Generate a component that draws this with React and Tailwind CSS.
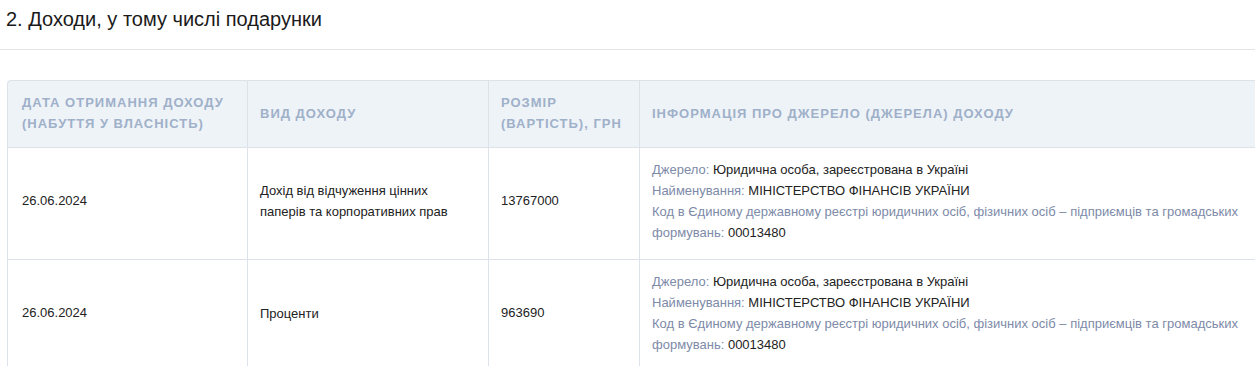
import React from 'react';

const ROWS = [
    { date: '26.06.2024', kind: 'Дохід від відчуження цінних паперів та корпоративних прав', amount: '13767000' },
    { date: '26.06.2024', kind: 'Проценти', amount: '963690' },
];

function SourceInfo() {
    return (
        <div className="leading-[21px]">
            <p><span className="text-[#7d8aa8]">Джерело:</span> Юридична особа, зареєстрована в Україні</p>
            <p><span className="text-[#7d8aa8]">Найменування:</span> МІНІСТЕРСТВО ФІНАНСІВ УКРАЇНИ</p>
            <p className="text-[#7d8aa8]">Код в Єдиному державному реєстрі юридичних осіб, фізичних осіб – підприємців та громадських</p>
            <p><span className="text-[#7d8aa8]">формувань:</span> 00013480</p>
        </div>
    );
}

export default function App() {
    return (
        <div className="w-[1255px] h-[366px] overflow-hidden bg-white text-[#222] font-['Liberation_Sans',Arial,sans-serif]">
            <h2 className="px-[6px] pt-[4px] pb-[14px] text-[20px] leading-[31px] font-normal text-[#1a1a1a]">
                2. Доходи, у тому числі подарунки
            </h2>
            <div className="border-t border-[#e3e3e3]" />
            <div className="pl-[7px] pt-[30px]">
                <table className="border-separate border-spacing-0 w-[1274px] table-fixed text-[13px]">
                    <colgroup>
                        <col className="w-[241px]" />
                        <col className="w-[241px]" />
                        <col className="w-[151px]" />
                        <col />
                    </colgroup>
                    <thead>
                        <tr className="bg-[#eef3f8] text-[#9fb0c9] uppercase text-[13px] tracking-[1px] leading-[21px] text-left">
                            <th className="h-[68px] px-[14px] pb-[2px] border border-[#dde2e8] rounded-tl-[4px] font-bold align-middle">Дата отримання доходу (набуття у власність)</th>
                            <th className="px-[12px] pb-[2px] border-y border-r border-[#dde2e8] font-bold align-middle">Вид доходу</th>
                            <th className="px-[12px] pb-[2px] border-y border-r border-[#dde2e8] font-bold align-middle">Розмір (вартість), грн</th>
                            <th className="px-[12px] pb-[2px] border-y border-r border-[#dde2e8] font-bold align-middle">Інформація про джерело (джерела) доходу</th>
                        </tr>
                    </thead>
                    <tbody>
                        {ROWS.map((r, i) => (
                            <tr key={i} className="align-middle">
                                <td className="h-[112px] px-[14px] pb-[5px] border-x border-b border-[#dde2e8]">{r.date}</td>
                                <td className="px-[12px] pr-[30px] pb-[5px] border-r border-b border-[#dde2e8] leading-[21px]">{r.kind}</td>
                                <td className="px-[12px] pb-[5px] border-r border-b border-[#dde2e8]">{r.amount}</td>
                                <td className="px-[12px] pt-[11px] border-r border-b border-[#dde2e8] align-top"><SourceInfo /></td>
                            </tr>
                        ))}
                    </tbody>
                </table>
            </div>
        </div>
    );
}
